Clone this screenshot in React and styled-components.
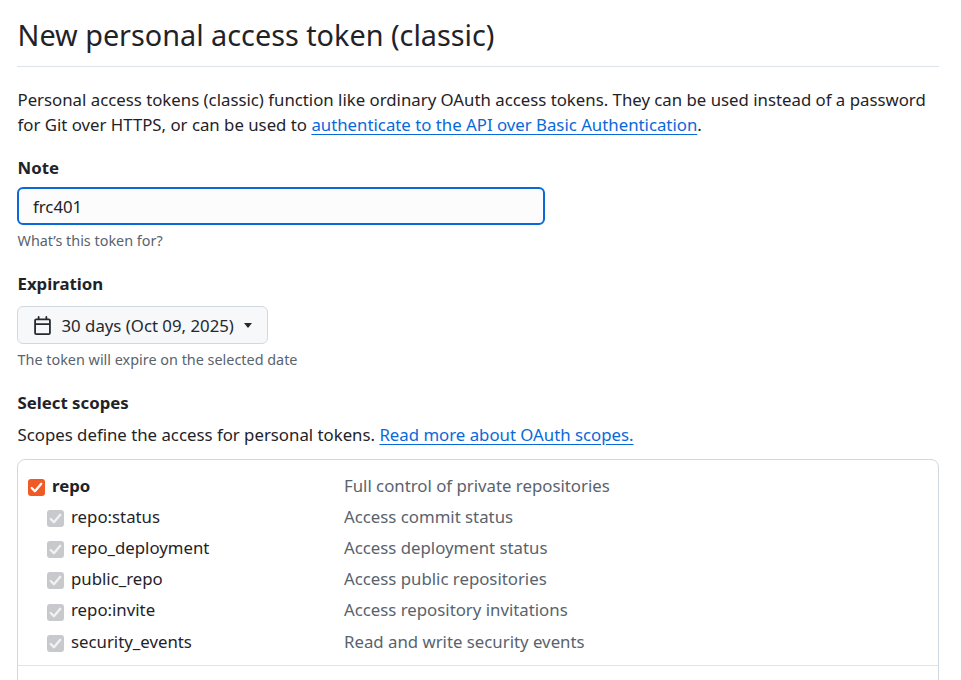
import React from "react";
import styled, { createGlobalStyle } from "styled-components";

const Global = createGlobalStyle`
  html, body { margin: 0; background: #fff; overflow: hidden; }
  body {
    font-family: "Noto Sans", sans-serif;
    font-size: 16.8px;
    line-height: 24.5px;
    color: #1f2328;
  }
`;

const Page = styled.div`
  width: 922px;
  height: 680px;
  margin-left: 17px;
  overflow: hidden;
`;

const Title = styled.h1`
  margin: 0;
  height: 67px;
  padding: 14px 0 0 0.5px;
  box-sizing: border-box;
  font-size: 28.8px;
  line-height: 42px;
  font-weight: 400;
  border-bottom: 1px solid #d1d9e0b3;
`;

const Intro = styled.p`
  margin: 21px 0 0;
  padding-left: 0.5px;
`;

const Link = styled.a`
  color: #0969da;
  text-decoration: underline;
  text-underline-offset: 3px;
`;

const Field = styled.div`
  margin-top: ${props => props.$top}px;
`;

const Label = styled.div`
  padding-left: 0.5px;
  font-weight: 700;
  line-height: 24px;
`;

const Input = styled.input`
  display: block;
  box-sizing: border-box;
  width: 528px;
  height: 38px;
  margin-top: 7px;
  padding: 0 14px;
  border: 2px solid #0969da;
  border-radius: 6px;
  background: #fcfcfc;
  outline: none;
  color: #1f2328;
  font: 16.8px "Noto Sans", sans-serif;
`;

const Hint = styled.div`
  margin-top: 5px;
  padding-left: 0.5px;
  font-size: 14.4px;
  line-height: 21px;
  color: #59636e;
`;

const Select = styled.button`
  display: flex;
  align-items: center;
  box-sizing: border-box;
  width: 251px;
  height: 38px;
  margin-top: 10px;
  padding: 0 14px 0 15px;
  border: 1px solid #d1d9e0;
  border-radius: 6px;
  background: #f6f8fa;
  color: #25292e;
  font: 16.8px "Noto Sans", sans-serif;
  white-space: nowrap;
`;

const CalendarIcon = styled.svg`
  flex: none;
  width: 19px;
  height: 19px;
  margin-right: 9.5px;
  fill: #25292e;
`;

const Caret = styled.span`
  flex: none;
  width: 0;
  height: 0;
  margin-left: 10px;
  border-style: solid;
  border-width: 5px 4.5px 0;
  border-color: #25292e transparent transparent;
`;

const Lead = styled.p`
  margin: 8px 0 0;
  padding-left: 0.5px;
`;

const ScopeBox = styled.div`
  box-sizing: border-box;
  margin-top: 11px;
  height: 300px;
  padding-top: 11px;
  border: 1px solid #d1d9e0;
  border-radius: 8px;
`;

const ScopeRow = styled.div`
  display: grid;
  grid-template-columns: 316px 1fr;
  align-items: center;
  height: 31.15px;
  padding-left: 10px;
`;

const ScopeName = styled.div`
  display: flex;
  align-items: center;
  gap: 7px;
  padding-left: ${props => (props.$child ? 19 : 0)}px;
  font-weight: ${props => (props.$child ? 400 : 700)};
`;

const Check = styled.span`
  display: flex;
  align-items: center;
  justify-content: center;
  margin-top: ${props => (props.$child ? 3 : 2)}px;
  border-radius: 3px;
  width: 17px;
  height: 17px;
  background: ${props => (props.$child ? "#c8c9cc" : "#f05a24")};
`;

const CheckMark = styled.svg`
  width: 17px;
  height: 17px;
  fill: none;
  stroke: ${props => (props.$child ? "#f2f2f3" : "#fff")};
  stroke-width: 2.2;
  stroke-linecap: round;
  stroke-linejoin: round;
`;

const ScopeDesc = styled.div`
  color: #59636e;
`;

const Divider = styled.div`
  margin-top: 8px;
  border-top: 1px solid #d1d9e0b3;
`;

const scopes = [
  ["repo", "Full control of private repositories", false],
  ["repo:status", "Access commit status", true],
  ["repo_deployment", "Access deployment status", true],
  ["public_repo", "Access public repositories", true],
  ["repo:invite", "Access repository invitations", true],
  ["security_events", "Read and write security events", true],
];

export default function App() {
  return (
    <Page>
      <Global />
      <Title>New personal access token (classic)</Title>
      <Intro>
        Personal access tokens (classic) function like ordinary OAuth access tokens. They can be used instead of a
        password for Git over HTTPS, or can be used to{" "}
        <Link href="#">authenticate to the API over Basic Authentication</Link>.
      </Intro>

      <Field $top={19}>
        <Label>Note</Label>
        <Input defaultValue="frc401" />
        <Hint>What’s this token for?</Hint>
      </Field>

      <Field $top={21}>
        <Label>Expiration</Label>
        <Select>
          <CalendarIcon viewBox="0 0 16 16">
            <path d="M4.75 0a.75.75 0 0 1 .75.75V2h5V.75a.75.75 0 0 1 1.5 0V2h1.25c.966 0 1.75.784 1.75 1.75v10.5A1.75 1.75 0 0 1 13.25 16H2.75A1.75 1.75 0 0 1 1 14.25V3.75C1 2.784 1.784 2 2.75 2H4V.75A.75.75 0 0 1 4.75 0ZM2.5 7.5v6.75c0 .138.112.25.25.25h10.5a.25.25 0 0 0 .25-.25V7.5Zm10.75-4H2.75a.25.25 0 0 0-.25.25V6h11V3.75a.25.25 0 0 0-.25-.25Z" />
          </CalendarIcon>
          30 days (Oct 09, 2025)
          <Caret />
        </Select>
        <Hint>The token will expire on the selected date</Hint>
      </Field>

      <Field $top={21}>
        <Label>Select scopes</Label>
        <Lead>
          Scopes define the access for personal tokens. <Link href="#">Read more about OAuth scopes.</Link>
        </Lead>
        <ScopeBox>
          {scopes.map(([name, desc, child]) => (
            <ScopeRow key={name}>
              <ScopeName $child={child}>
                <Check $child={child}>
                  <CheckMark $child={child} viewBox="0 0 16 16">
                    <path d="M3.5 8.5 6.5 11.5 12.5 4.5" />
                  </CheckMark>
                </Check>
                {name}
              </ScopeName>
              <ScopeDesc>{desc}</ScopeDesc>
            </ScopeRow>
          ))}
          <Divider />
        </ScopeBox>
      </Field>
    </Page>
  );
}
